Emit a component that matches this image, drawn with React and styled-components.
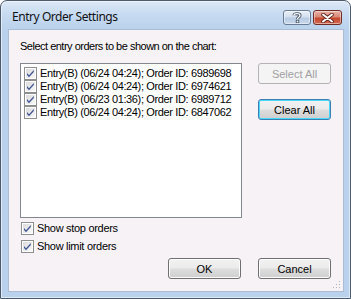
import React from "react";
import styled, { createGlobalStyle } from "styled-components";

const Global = createGlobalStyle`
  html, body { margin: 0; padding: 0; background: #fff; }
  body { width: 351px; height: 299px; overflow: hidden; }
  * { box-sizing: border-box; }
`;

const Window = styled.div`
  width: 351px;
  height: 299px;
  border: 1px solid #4c5a6c;
  border-radius: 7px 7px 0 0;
  background: linear-gradient(180deg, #dce8f6 0px, #c6daf1 14px, #b9d1ec 30px, #b9d1ec 100%);
  display: flex;
  flex-direction: column;
  padding: 0 6px 6px 7px;
  box-shadow: inset 0 0 0 1px rgba(255, 255, 255, 0.55);
`;

const TitleBar = styled.div`
  height: 28px;
  display: flex;
  align-items: flex-start;
  padding-top: 9px;
`;

const Title = styled.div`
  font-family: "Noto Sans", sans-serif;
  font-size: 12px;
  color: #111;
  padding-left: 4px;
  line-height: 14px;
  flex: 1;
  letter-spacing: -0.45px;
`;

const CaptionButtons = styled.div`
  display: flex;
  gap: 2px;
  margin-right: 2px;
`;

const CapBtn = styled.div`
  width: ${(p) => p.$w}px;
  height: 15px;
  border-radius: 3px;
  border: 1px solid ${(p) => (p.$red ? "#6e2c24" : "#6a7b94")};
  background: ${(p) =>
    p.$red
      ? "linear-gradient(180deg, #e9b2a6 0%, #d98a78 45%, #c4472f 55%, #d36a50 100%)"
      : "linear-gradient(180deg, #e8eff8 0%, #d3e0ef 45%, #b8cbe3 55%, #c9d9ec 100%)"};
  display: flex;
  align-items: center;
  justify-content: center;
  box-shadow: inset 0 0 0 1px rgba(255, 255, 255, 0.45);
`;

const Content = styled.div`
  flex: 1;
  background: #f6f2f6;
  border: 1px solid #aabdd4;
  position: relative;
  padding: 0 0 0 11px;
  display: flex;
  flex-direction: column;
  font-family: "Liberation Sans", Arial, sans-serif;
  font-size: 11px;
  color: #000;
`;

const Label = styled.div`
  margin-top: 10px;
  height: 13px;
  line-height: 13px;
  letter-spacing: -0.5px;
`;

const MainRow = styled.div`
  display: flex;
  margin-top: 10px;
  gap: 16px;
`;

const ListBox = styled.div`
  width: 222px;
  height: 155px;
  background: #fff;
  border: 1px solid #828790;
  padding: 3px 0 0 3px;
  display: flex;
  flex-direction: column;
`;

const ListItem = styled.div`
  display: flex;
  align-items: center;
  height: 13px;
  gap: 3px;
  white-space: nowrap;
  line-height: 13px;
  letter-spacing: -0.36px;
`;

const SideButtons = styled.div`
  display: flex;
  flex-direction: column;
  gap: 15px;
`;

const Button = styled.div`
  width: ${(p) => p.$w || 73}px;
  height: 21px;
  border-radius: 3px;
  display: flex;
  align-items: center;
  justify-content: center;
  font-size: 11px;
  border: 1px solid ${(p) => (p.$disabled ? "#b5b2b5" : p.$focus ? "#3c7fb1" : "#707070")};
  color: ${(p) => (p.$disabled ? "#a19fa1" : "#000")};
  background: ${(p) =>
    p.$disabled
      ? "#f4f4f4"
      : "linear-gradient(180deg, #f2f2f2 0%, #ebebeb 48%, #dddddd 52%, #cfcfcf 100%)"};
  box-shadow: ${(p) =>
    p.$focus ? "inset 0 0 0 1px #48d8fb" : p.$disabled ? "none" : "inset 0 0 0 1px #fcfcfc"};
`;

const Options = styled.div`
  margin-top: 4px;
  display: flex;
  flex-direction: column;
  gap: 5px;
  padding-left: 1px;
`;

const Option = styled.div`
  display: flex;
  align-items: center;
  gap: 3px;
  height: 13px;
  line-height: 13px;
  letter-spacing: -0.3px;
`;

const Footer = styled.div`
  display: flex;
  justify-content: flex-end;
  gap: 17px;
  margin-top: 5px;
  padding-right: 12px;
`;

const Grip = styled.svg`
  position: absolute;
  right: 2px;
  bottom: 2px;
`;

const Check = ({ size = 13 }) => (
  <svg width={size} height={size} viewBox="0 0 13 13" style={{ flex: "none" }}>
    <defs>
      <linearGradient id="cbg" x1="0" y1="0" x2="1" y2="1">
        <stop offset="0" stopColor="#dcdcdc" />
        <stop offset="1" stopColor="#f8f8f8" />
      </linearGradient>
    </defs>
    <rect x="0.5" y="0.5" width="12" height="12" fill="#fff" stroke="#8e8f8f" />
    <rect x="2" y="2" width="9" height="9" fill="url(#cbg)" />
    <path d="M3 6 L5 8.2 L9.8 3 L9.8 5 L5 10.2 L3 8 Z" fill="#3f5592" />
  </svg>
);

const rows = [
  "Entry(B) (06/24 04:24); Order ID: 6989698",
  "Entry(B) (06/24 04:24); Order ID: 6974621",
  "Entry(B) (06/23 01:36); Order ID: 6989712",
  "Entry(B) (06/24 04:24); Order ID: 6847062",
];

export default function App() {
  return (
    <>
      <Global />
      <Window>
        <TitleBar>
          <Title>Entry Order Settings</Title>
          <CaptionButtons>
            <CapBtn $w={28}>
              <svg width="10" height="11" viewBox="0 0 10 11">
                <path
                  d="M2 3.2 C2 1.2 8 1 8 3.4 C8 5.2 5.5 5.2 5.5 7"
                  fill="none"
                  stroke="#3d4a5c"
                  strokeWidth="3"
                />
                <path
                  d="M2 3.2 C2 1.2 8 1 8 3.4 C8 5.2 5.5 5.2 5.5 7"
                  fill="none"
                  stroke="#fff"
                  strokeWidth="1.4"
                />
                <rect x="4.2" y="8.2" width="2.6" height="2.6" fill="#fff" stroke="#3d4a5c" strokeWidth="0.8" />
              </svg>
            </CapBtn>
            <CapBtn $w={29} $red>
              <svg width="13" height="10" viewBox="0 0 13 10">
                <path d="M2 1.5 L11 8.5 M11 1.5 L2 8.5" stroke="#5a2118" strokeWidth="3.6" strokeLinecap="round" />
                <path d="M2 1.5 L11 8.5 M11 1.5 L2 8.5" stroke="#fff" strokeWidth="2" strokeLinecap="round" />
              </svg>
            </CapBtn>
          </CaptionButtons>
        </TitleBar>
        <Content>
          <Label>Select entry orders to be shown on the chart:</Label>
          <MainRow>
            <ListBox>
              {rows.map((r, i) => (
                <ListItem key={i}>
                  <Check />
                  <span>{r}</span>
                </ListItem>
              ))}
            </ListBox>
            <SideButtons>
              <Button $disabled>Select All</Button>
              <Button $focus>Clear All</Button>
            </SideButtons>
          </MainRow>
          <Options>
            <Option>
              <Check />
              <span>Show stop orders</span>
            </Option>
            <Option>
              <Check />
              <span>Show limit orders</span>
            </Option>
          </Options>
          <Footer>
            <Button>OK</Button>
            <Button>Cancel</Button>
          </Footer>
          <Grip width="10" height="10" viewBox="0 0 10 10">
            {[
              [8, 2],
              [8, 5],
              [8, 8],
              [5, 5],
              [5, 8],
              [2, 8],
            ].map(([x, y], i) => (
              <rect key={i} x={x} y={y} width="1" height="1" fill="#b0b4bb" />
            ))}
          </Grip>
        </Content>
      </Window>
    </>
  );
}
